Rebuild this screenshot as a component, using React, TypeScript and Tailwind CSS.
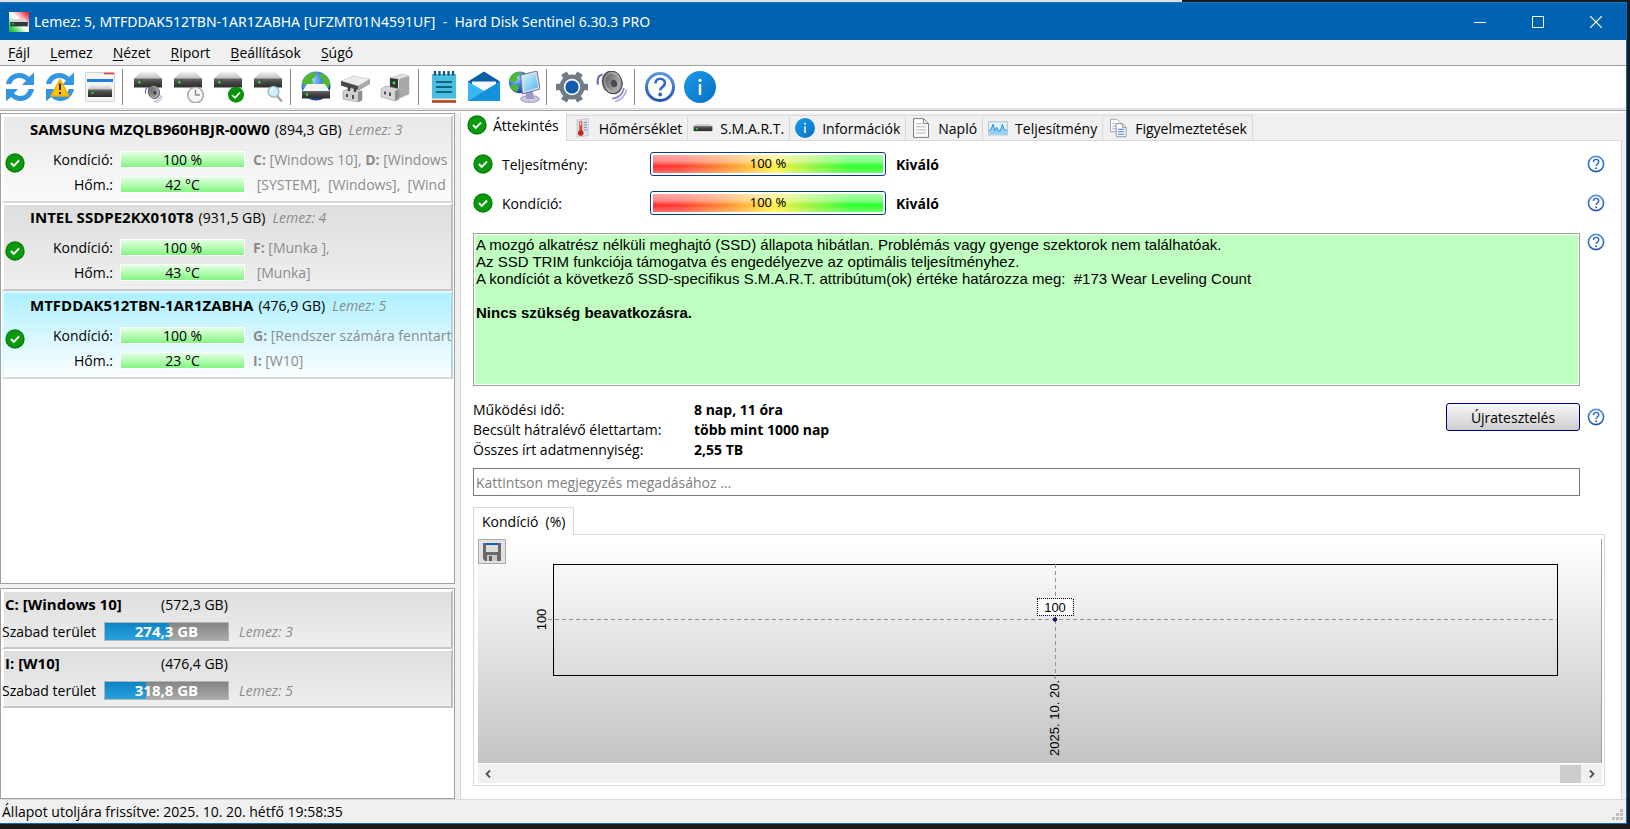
import { useState } from "react";
import type { ReactNode } from "react";

const menuItems = ["Fájl", "Lemez", "Nézet", "Riport", "Beállítások", "Súgó"];

const disks = [
  {
    name: "SAMSUNG MZQLB960HBJR-00W0",
    size: "(894,3 GB)",
    index: 3,
    health: "100 %",
    temp: "42 °C",
    volumes: [
      { letter: "C:", label: "[Windows 10], " },
      { letter: "D:", label: "[Windows" },
    ],
    second: [{ letter: "", label: " [SYSTEM],  [Windows],  [Wind" }],
    look: "bg-linear-to-b from-[#e8e8e8] to-[#fbfbfb] border-t-white border-l-white border-r-[#c8c8c8] border-b-[#d9d9d9]",
  },
  {
    name: "INTEL SSDPE2KX010T8",
    size: "(931,5 GB)",
    index: 4,
    health: "100 %",
    temp: "43 °C",
    volumes: [{ letter: "F:", label: "[Munka ]," }],
    second: [{ letter: "", label: " [Munka]" }],
    look: "bg-linear-to-b from-[#dedede] to-[#efefef] border-t-white border-l-white border-r-[#bcbcbc] border-b-[#c8c8c8]",
  },
  {
    name: "MTFDDAK512TBN-1AR1ZABHA",
    size: "(476,9 GB)",
    index: 5,
    health: "100 %",
    temp: "23 °C",
    volumes: [{ letter: "G:", label: "[Rendszer számára fenntart" }],
    second: [{ letter: "I:", label: "[W10]" }],
    look: "bg-linear-to-b from-[#adf0ff] to-[#fbfeff] border-t-[#dcfaff] border-l-[#dcfaff] border-r-[#b4d4dc] border-b-[#d9d9d9]",
  },
];

const volumes = [
  { name: "C: [Windows 10]", size: "(572,3 GB)", free: "274,3 GB", disk: 3, used: 52 },
  { name: "I: [W10]", size: "(476,4 GB)", free: "318,8 GB", disk: 5, used: 33 },
];

const stats = [
  { label: "Működési idő:", value: "8 nap, 11 óra" },
  { label: "Becsült hátralévő élettartam:", value: "több mint 1000 nap" },
  { label: "Összes írt adatmennyiség:", value: "2,55 TB" },
];

function Gradients() {
  return (
    <svg width="0" height="0" className="absolute" aria-hidden="true">
      <defs>
        <linearGradient id="metal" x1="0" y1="0" x2="0" y2="1">
          <stop offset="0" stopColor="#f2f2f2" />
          <stop offset="1" stopColor="#bdbdbd" />
        </linearGradient>
        <linearGradient id="front" x1="0" y1="0" x2="0" y2="1">
          <stop offset="0" stopColor="#6a6a6a" />
          <stop offset="0.4" stopColor="#474747" />
          <stop offset="1" stopColor="#2c2c2c" />
        </linearGradient>
        <radialGradient id="earth" cx="0.35" cy="0.3" r="0.8">
          <stop offset="0" stopColor="#a9dcff" />
          <stop offset="0.5" stopColor="#3579dc" />
          <stop offset="1" stopColor="#12348c" />
        </radialGradient>
        <linearGradient id="screen" x1="0" y1="0" x2="1" y2="1">
          <stop offset="0" stopColor="#d4f5ff" />
          <stop offset="1" stopColor="#4db4ee" />
        </linearGradient>
        <linearGradient id="rim" x1="0" y1="0" x2="1" y2="1">
          <stop offset="0" stopColor="#5e5e62" />
          <stop offset="0.5" stopColor="#b8b8ba" />
          <stop offset="1" stopColor="#77777b" />
        </linearGradient>
        <linearGradient id="cone" x1="0" y1="0" x2="1" y2="1">
          <stop offset="0" stopColor="#59595d" />
          <stop offset="1" stopColor="#c4c4c6" />
        </linearGradient>
        <linearGradient id="help" x1="0" y1="0" x2="0" y2="1">
          <stop offset="0" stopColor="#5b95e0" />
          <stop offset="1" stopColor="#2055b4" />
        </linearGradient>
        <linearGradient id="info" x1="0" y1="0" x2="1" y2="1">
          <stop offset="0" stopColor="#1c9bea" />
          <stop offset="1" stopColor="#0670c4" />
        </linearGradient>
        <linearGradient id="appicon" x1="0" y1="1" x2="1" y2="0">
          <stop offset="0" stopColor="#10b824" />
          <stop offset="0.15" stopColor="#3ccc4a" />
          <stop offset="0.48" stopColor="#ffffff" />
          <stop offset="0.56" stopColor="#ffffff" />
          <stop offset="0.88" stopColor="#f4454e" />
          <stop offset="1" stopColor="#ec1420" />
        </linearGradient>
      </defs>
    </svg>
  );
}

function Icon({ children, className = "size-8" }: { children: ReactNode; className?: string }) {
  return (
    <svg viewBox="0 0 32 32" className={`${className} shrink-0`} fill="none" aria-hidden="true">
      {children}
    </svg>
  );
}

function Drive() {
  return (
    <>
      <path d="M8 1h16l6 7H2z" fill="url(#metal)" />
      <path d="M2 7.5h28v9H2z" fill="url(#front)" />
      <circle cx="7.3" cy="11.3" r="1.2" fill="#2cf03a" />
    </>
  );
}

function Arrows() {
  return (
    <g fill="#3496e2">
      <path d="M2 13C3 6.500 8.500 2 15.500 2c3.800 0 7 1.500 9.300 4L30 1.800V14H18l4-4.300C20.300 8 18 7 15.500 7 11.500 7 8.500 9.300 7.300 13z" />
      <path d="M30 18c-1 6.500-6.500 12-13.500 12-3.800 0-7-1.500-9.300-4L2 30.200V18h12l-4 4.300c1.700 1.700 4 2.700 6.500 2.700 4 0 7-2.800 8.200-7z" />
    </g>
  );
}

function Speaker() {
  return (
    <>
      <path d="M6.500 3.500C2.500 4 .8 8 2 13.500" stroke="#6a62b8" strokeWidth="2" />
      <path d="M9 2.500C5 5 4.500 12 8 18.500l6 4-1-19z" fill="#8d8d92" />
      <ellipse cx="16.500" cy="11.500" rx="9.500" ry="11.500" transform="rotate(-18 16.500 11.500)" fill="url(#rim)" stroke="#3f3f44" strokeWidth="1" />
      <ellipse cx="17" cy="11.500" rx="7" ry="9" transform="rotate(-18 17 11.500)" fill="url(#cone)" />
      <ellipse cx="18" cy="12.500" rx="3" ry="3.800" transform="rotate(-18 18 12.500)" fill="#4a4a4e" />
      <path d="M16 27.500c6 0 11-4.500 12-10.500" stroke="#8c87cc" strokeWidth="1.700" />
      <path d="M19 30.500c5.500-.8 10.500-5.500 11.500-12" stroke="#b5b1de" strokeWidth="1.700" />
    </>
  );
}

function Globe({ x = 0, y = 0, scale = 1 }: { x?: number; y?: number; scale?: number }) {
  return (
    <g transform={`translate(${x} ${y}) scale(${scale})`}>
      <circle cx="15" cy="15" r="14.500" fill="url(#earth)" />
      <path d="M3 7c3-4 7-6 11-6l1 4-4 3 1 4-5 3-4-2-2 1C1 11 2 9 3 7zM19 2c5 1 9 5 10.300 10l-3 7-4-1-2-5 2-4-4-3zM6 18l6 1 2 4-3 5c-5-2-8-5-9-8z" fill="#4fb832" />
    </g>
  );
}

function Check({ className = "size-5" }: { className?: string }) {
  return (
    <Icon className={className}>
      <circle cx="16" cy="16" r="15.500" fill="#08790b" />
      <circle cx="16" cy="16" r="13.500" fill="#0a9a0d" />
      <path d="M9.500 16l4.500 4.500 8.500-8.500" stroke="#fff" strokeWidth="3" />
    </Icon>
  );
}

function HelpGlyph() {
  return (
    <>
      <circle cx="16" cy="16" r="13.500" fill="#fff" stroke="url(#help)" strokeWidth="3" />
      <path d="M11.500 12.500c0-3 2-4.700 4.700-4.700s4.700 1.700 4.700 4.300c0 3.900-4.700 4-4.700 7.400" stroke="#2f69c8" strokeWidth="2.600" />
      <circle cx="16.200" cy="23.500" r="1.900" fill="#2f69c8" />
    </>
  );
}

function InfoGlyph() {
  return (
    <>
      <circle cx="16" cy="16" r="16" fill="url(#info)" />
      <circle cx="16" cy="9.300" r="1.600" fill="#fff" />
      <path d="M16 13v11" stroke="#fff" strokeWidth="2.400" />
    </>
  );
}

function HelpButton() {
  return (
    <button aria-label="Súgó" className="shrink-0">
      <Icon className="size-[18px]">
        <HelpGlyph />
      </Icon>
    </button>
  );
}

const toolGroups: { label: string; art: ReactNode }[][] = [
  [
    { label: "Frissítés", art: <Arrows /> },
    {
      label: "Frissítés figyelmeztetéssel",
      art: (
        <>
          <Arrows />
          <path d="M16 8.500L25 25H7z" fill="#ffc20a" stroke="#f5ac00" strokeWidth="1.500" strokeLinejoin="round" />
          <path d="M16 12.500v6.500M16 21v2.300" stroke="#2b2b2b" strokeWidth="2" />
        </>
      ),
    },
    {
      label: "Lemez lista",
      art: (
        <>
          <path d="M1.500 1.500h29v29h-29z" fill="#f4f4f4" stroke="#d4d4d4" />
          <path d="M20 2.500h10" stroke="#e33a3a" strokeWidth="1.600" />
          <path d="M3 9.500h26" stroke="#1f7fe0" strokeWidth="3" />
          <path d="M7 14h18l4 5H3z" fill="url(#metal)" />
          <path d="M4 18.500h24v7.500H4z" fill="url(#front)" />
          <circle cx="8.500" cy="22" r="1.100" fill="#2cf03a" />
        </>
      ),
    },
  ],
  [
    {
      label: "Lemez hang",
      art: (
        <>
          <Drive />
          <g transform="translate(12.500 14.500) scale(0.580)">
            <Speaker />
          </g>
        </>
      ),
    },
    {
      label: "Lemez ütemezés",
      art: (
        <>
          <Drive />
          <circle cx="23.500" cy="24" r="7.800" fill="#f7f7f7" stroke="#a8a8a8" strokeWidth="1.500" />
          <path d="M23.500 18.500V24H28" stroke="#8e8e8e" strokeWidth="1.400" />
        </>
      ),
    },
    {
      label: "Lemez teszt",
      art: (
        <>
          <Drive />
          <circle cx="24" cy="23.700" r="8" fill="#08930b" />
          <path d="M20 24l3 2.800 5-5.300" stroke="#fff" strokeWidth="1.700" />
        </>
      ),
    },
    {
      label: "Lemez keresés",
      art: (
        <>
          <Drive />
          <path d="M25 25l5 5.500" stroke="#a4a4a4" strokeWidth="2.600" />
          <circle cx="21.500" cy="20.800" r="5.400" fill="#cfeeff" stroke="#9fb8cc" strokeWidth="1.400" />
          <path d="M18.500 20a3.500 3.500 0 013-2.700" stroke="#fff" strokeWidth="1.500" />
        </>
      ),
    },
  ],
  [
    {
      label: "Hálózati lemez",
      art: (
        <>
          <Globe x={1} />
          <path d="M7 13h18l5 8H2z" fill="#f4f4f4" />
          <path d="M2 20h28v7.500H2z" fill="url(#front)" />
          <circle cx="7" cy="23.500" r="1.200" fill="#2cf03a" />
        </>
      ),
    },
    {
      label: "Csatlakozó",
      art: (
        <>
          <path d="M1 10L13 5l17 3-12 7z" fill="#ececec" stroke="#c0c0c0" strokeWidth="0.600" />
          <path d="M1 10l17 5v5L1 14.500z" fill="#4a4a4a" />
          <path d="M18 15l12-7v5L18 20z" fill="#a8a8a8" />
          <path d="M3 20l8-3 11 3v9l-4 2-15-3z" fill="#cfcfcf" stroke="#979797" strokeWidth="0.600" />
          <path d="M18 21l4-1v9l-4 2z" fill="#8c8c8c" />
          <path d="M9 15v5M15 17v4" stroke="#3c3c3c" strokeWidth="2.400" />
          <path d="M7 23v3M13 24v4" stroke="#4a4a4a" strokeWidth="1.900" />
        </>
      ),
    },
    {
      label: "Dokkoló",
      art: (
        <>
          <path d="M10 7l12-4 7 2v18l-9 4-10-6z" fill="#e2e2e2" stroke="#b9b9b9" strokeWidth="0.600" />
          <path d="M19 8l10-3v18l-10 4z" fill="#a9a9a9" />
          <path d="M10 7l8 1v10l-8-1z" fill="#353535" />
          <circle cx="14" cy="12" r="1.400" fill="#2cf03a" />
          <path d="M1 18l5-3 13 3v10l-4 2-14-4z" fill="#d6d6d6" stroke="#9c9c9c" strokeWidth="0.600" />
          <path d="M15 20l4-2v10l-4 2z" fill="#8f8f8f" />
          <path d="M5 20.500v3M10 21.500v3.500" stroke="#4a4a4a" strokeWidth="1.900" />
        </>
      ),
    },
  ],
  [
    {
      label: "Napló",
      art: (
        <>
          <path d="M4 3h24v28H4z" fill="#48bfe0" />
          <path d="M4 29h24v2.800H4z" fill="#b0471a" />
          <path d="M4 27.500h24v1.700H4z" fill="#f1e9e3" />
          <path d="M8 11h16M8 16h16M8 21h16" stroke="#14657f" strokeWidth="2" />
          <path d="M7 0v4.500M11.500 0v4.500M16 0v4.500M20.500 0v4.500M25 0v4.500" stroke="#14536a" strokeWidth="2.200" />
        </>
      ),
    },
    {
      label: "E-mail",
      art: (
        <>
          <path d="M0 10.500L16 .500l16 10V18H0z" fill="#0f5fa8" />
          <path d="M4 10.500h24V20H4z" fill="#f5f9fd" />
          <path d="M0 10.500L16 20l16-9.500V30H0z" fill="#35b8f4" />
          <path d="M32 10.500L0 30h32z" fill="#1592dc" />
        </>
      ),
    },
    {
      label: "Hálózat",
      art: (
        <>
          <Globe x={0.5} y={0} scale={0.75} />
          <ellipse cx="22" cy="28" rx="9.500" ry="3.500" fill="#c9c8dc" stroke="#8d8bb0" strokeWidth="0.800" />
          <path d="M18 20h7l1 8h-8z" fill="#9d9bc8" />
          <path d="M12.500 4L29 0l3 18-17.500 5z" fill="#dcdcea" stroke="#6f6e9c" strokeWidth="1" />
          <path d="M14.800 6l12.800-3.300L30 16.500 16.500 20.500z" fill="url(#screen)" />
        </>
      ),
    },
  ],
  [
    {
      label: "Beállítások",
      art: (
        <>
          <circle cx="16" cy="16" r="9.500" stroke="#6f7b87" strokeWidth="6" />
          <g stroke="#6f7b87" strokeWidth="6.500">
            <path d="M0 16h6M26 16h6M8 2.200l3 5.200M21 24.600l3 5.200M24 2.200l-3 5.200M11 24.600l-3 5.200" />
          </g>
          <circle cx="16" cy="16" r="8.200" fill="#fff" />
          <circle cx="16" cy="16" r="6.600" fill="#0f5cae" />
        </>
      ),
    },
    { label: "Hang", art: <Speaker /> },
  ],
  [
    { label: "Súgó", art: <HelpGlyph /> },
    { label: "Információ", art: <InfoGlyph /> },
  ],
];

const tabs: { label: string; art: ReactNode }[] = [
  { label: "Áttekintés", art: <Check /> },
  {
    label: "Hőmérséklet",
    art: (
      <Icon className="size-5">
        <path d="M8 3l18-2v27l-18 3z" fill="#dbe2ec" stroke="#b4bece" />
        <path d="M19 7h5M19 11h5M19 15h5M19 19h5" stroke="#6e8fae" strokeWidth="1.500" />
        <path d="M14 7v15" stroke="#e4443a" strokeWidth="5" strokeLinecap="round" />
        <circle cx="14" cy="24" r="4.500" fill="#c9251d" />
        <path d="M14 6v6" stroke="#fff" strokeWidth="1.500" />
      </Icon>
    ),
  },
  {
    label: "S.M.A.R.T.",
    art: (
      <Icon className="size-5">
        <path d="M5 10h22l4 3H1z" fill="#c9c9c9" />
        <path d="M1 13h30v8H1z" fill="url(#front)" />
        <circle cx="6" cy="17" r="1.500" fill="#2cf03a" />
      </Icon>
    ),
  },
  {
    label: "Információk",
    art: (
      <Icon className="size-5">
        <InfoGlyph />
      </Icon>
    ),
  },
  {
    label: "Napló",
    art: (
      <Icon className="size-5">
        <path d="M4 1h16l8 8v22H4z" fill="#fdfdfd" stroke="#7d7d7d" strokeWidth="1.600" />
        <path d="M20 1v8h8" stroke="#7d7d7d" strokeWidth="1.600" />
        <path d="M8 9h8M8 14h16M8 19h16M8 24h16" stroke="#b5b5b5" strokeWidth="1.600" />
      </Icon>
    ),
  },
  {
    label: "Teljesítmény",
    art: (
      <Icon className="size-5">
        <path d="M1 6h30v21H1z" fill="#e3f2fb" stroke="#a9bfce" strokeWidth="1.500" />
        <path d="M2 20l3-2 3-8 3 10 3-5 3 6 3-1 3-10 3 8 4 2v6H2z" fill="#8fd0f5" />
        <path d="M2 20l3-2 3-8 3 10 3-5 3 6 3-1 3-10 3 8 4 2" stroke="#2b90d4" strokeWidth="1.600" />
      </Icon>
    ),
  },
  {
    label: "Figyelmeztetések",
    art: (
      <Icon className="size-5">
        <path d="M4 2h10l6 6v14H4z" fill="#fafafa" stroke="#9b9b9b" strokeWidth="1.400" />
        <path d="M7 9h6M7 13h6M7 17h6" stroke="#8cb4ec" strokeWidth="1.400" />
        <path d="M13 9h10l6 6v15H13z" fill="#fafafa" stroke="#8a8a8a" strokeWidth="1.400" />
        <path d="M23 9v6h6" stroke="#8a8a8a" strokeWidth="1.400" />
        <path d="M16 18h10M16 22h10M16 26h10" stroke="#3b82e6" strokeWidth="1.600" />
      </Icon>
    ),
  },
];

function TitleBar() {
  return (
    <header className="flex h-[38px] items-stretch border-t border-[#1a78c2] bg-[#0063b1] text-white">
      <div className="flex min-w-0 flex-1 items-center gap-[5px] pl-[9px]">
        <Icon className="size-5">
          <path d="M0 0h32v32H0z" fill="url(#appicon)" />
          <path d="M6 11h20l4 5H2z" fill="#d5d5d5" />
          <path d="M2 16h28v7H2z" fill="#2e3a34" />
          <path d="M5 19h2.500" stroke="#2cf03a" strokeWidth="2" />
        </Icon>
        <h1 className="truncate font-['Noto_Sans','Open_Sans',sans-serif] whitespace-pre">
          {"Lemez: 5, MTFDDAK512TBN-1AR1ZABHA [UFZMT01N4591UF]  -  Hard Disk Sentinel 6.30.3 PRO"}
        </h1>
      </div>
      <div className="flex pr-px">
        <button aria-label="Kis méret" className="flex w-[58px] items-center justify-center">
          <svg width="12" height="12" stroke="#fff">
            <path d="M0 6.500h12" />
          </svg>
        </button>
        <button aria-label="Teljes méret" className="flex w-[58px] items-center justify-center">
          <svg width="12" height="12" fill="none" stroke="#fff">
            <path d="M.5.5h11v11H.5z" />
          </svg>
        </button>
        <button aria-label="Bezárás" className="flex w-[58px] items-center justify-center">
          <svg width="12" height="12" stroke="#fff" strokeWidth="1.200">
            <path d="M0 0l12 12M12 0L0 12" />
          </svg>
        </button>
      </div>
    </header>
  );
}

function Toolbar() {
  return (
    <div role="toolbar" className="flex h-[43px] border-b border-[#d9d9d9] bg-white">
      {toolGroups.map((group, i) => (
        <div key={i} className="flex">
          {i > 0 && <div className="my-[3px] mr-[5px] ml-0.5 w-px bg-[#8a8a8a]" />}
          {group.map((tool) => (
            <button key={tool.label} aria-label={tool.label} className="flex w-10 items-center justify-center">
              <Icon>{tool.art}</Icon>
            </button>
          ))}
        </div>
      ))}
    </div>
  );
}

type Volume = { letter: string; label: string };

function VolumeText({ items }: { items: Volume[] }) {
  return (
    <div className="min-w-0 flex-1 whitespace-pre text-[#8c8c8c]">
      {items.map((v, i) => (
        <span key={i}>
          {v.letter && <b>{v.letter} </b>}
          {v.label}
        </span>
      ))}
    </div>
  );
}

function DiskRow({ label, value, items }: { label: string; value: string; items: Volume[] }) {
  return (
    <div className="flex h-[25px] items-center">
      <div className="w-[87px] pr-[7px] text-right">{label}</div>
      <div className="mr-2 flex h-[17px] w-[125px] items-center justify-center border border-white bg-linear-to-b from-[#e4ffe4] to-[#80f680]">
        {value}
      </div>
      <VolumeText items={items} />
    </div>
  );
}

function DiskList() {
  return (
    <section className="flex-1 border border-[#a0a0a0] bg-white p-px">
      {disks.map((d) => (
        <article key={d.name} className={`border-2 ${d.look}`}>
          <h2 className="flex h-6 items-center gap-[5px] pl-[26px]">
            <b className="text-[15px]">{d.name}</b>
            <span>{d.size}</span>
            <i className="pl-0.5 text-[#8c8c8c]">Lemez: {d.index}</i>
          </h2>
          <div className="flex items-center pt-1.5 pb-1">
            <div className="w-[29px] pb-[18px] pl-px">
              <Check />
            </div>
            <div className="min-w-0 flex-1">
              <DiskRow label="Kondíció:" value={d.health} items={d.volumes} />
              <DiskRow label="Hőm.:" value={d.temp} items={d.second} />
            </div>
          </div>
        </article>
      ))}
    </section>
  );
}

function VolumeList() {
  return (
    <section className="h-[211px] border border-[#a0a0a0] bg-white p-px">
      {volumes.map((v) => (
        <article
          key={v.name}
          className="border-2 border-t-white border-r-[#bcbcbc] border-b-[#c8c8c8] border-l-white bg-linear-to-b from-[#dedede] to-[#efefef]"
        >
          <h2 className="flex h-6 items-center pl-px">
            <b className="w-[156px] text-[15px]">{v.name}</b>
            <span>{v.size}</span>
          </h2>
          <div className="flex h-[31px] items-center">
            <span className="-ml-0.5 w-[102px]">Szabad terület</span>
            <div className="relative flex h-[19px] w-[125px] items-center justify-center border border-[#b4b4b4] bg-linear-to-b from-[#858585] to-[#a9a9a9] text-[15px] font-bold text-white">
              <div
                className="absolute inset-y-0 left-0 bg-linear-to-b from-[#0a84c6] to-[#2aa0dc]"
                style={{ width: `${v.used}%` }}
              />
              <span className="relative">{v.free}</span>
            </div>
            <i className="pl-2.5 text-[#8c8c8c]">Lemez: {v.disk}</i>
          </div>
        </article>
      ))}
    </section>
  );
}

function Meter({ label }: { label: string }) {
  return (
    <div className="flex h-6 items-center">
      <Check />
      <span className="w-[157px] pl-[9px]">{label}</span>
      <div className="h-6 w-[236px] rounded-[3px] border border-[#0a3a78] bg-white p-0.5">
        <div className="relative h-full bg-[linear-gradient(to_right,#ff2a2a_0%,#ff3a30_12%,#ff9a2e_35%,#fff23a_53%,#8cf43a_70%,#2bff2b_86%)]">
          <div className="absolute inset-0 flex items-center justify-center bg-[linear-gradient(to_bottom,#ffffff90_0%,#ffffff70_35%,#ffffff00_62%,#ffffff50_100%)] font-['Noto_Sans','Open_Sans',sans-serif] text-[13px]">
            100 %
          </div>
        </div>
      </div>
      <b className="flex-1 pl-2.5">Kiváló</b>
      <HelpButton />
    </div>
  );
}

function Chart() {
  return (
    <div className="flex min-h-0 flex-1 flex-col border-r border-[#a0a0a0] bg-linear-to-b from-white to-[#c4c4c4]">
      <button
        aria-label="Mentés"
        className="flex h-[25px] w-7 shrink-0 items-center justify-center border border-[#adadad] bg-[#e1e1e1]"
      >
        <svg width="18" height="18" viewBox="0 0 18 18">
          <path d="M0 0h18v18H2l-2-2z" fill="#696969" />
          <path d="M3 0h12v9H3z" fill="#dcdcdc" />
          <path d="M3 0h12v2H3z" fill="#0e63b4" />
          <path d="M4 12h10v6H4z" fill="#c9c9c9" />
          <path d="M6 13h3v5H6z" fill="#5d5d5d" />
        </svg>
      </button>
      <div className="flex min-h-0 flex-1 flex-col pr-11 pb-[88px] pl-[75px]">
        <svg
          className="block h-0 min-h-0 w-full flex-1 overflow-visible"
          fontFamily="Liberation Sans, Arial, sans-serif"
          fontSize="13"
        >
          <rect x="0" y="0" width="100%" height="100%" fill="none" stroke="#000" shapeRendering="crispEdges" />
          <g stroke="#949494" strokeDasharray="4 3" shapeRendering="crispEdges">
            <line x1="-5" x2="100%" y1="50%" y2="50%" />
            <line x1="50%" x2="50%" y1="0" y2="100%" />
          </g>
          <svg x="0" y="50%" overflow="visible">
            <text transform="translate(-7 0) rotate(-90)" textAnchor="middle">100</text>
          </svg>
          <svg x="50%" y="50%" overflow="visible">
            <rect x="-18" y="-21" width="35" height="17" fill="#fff" />
            <g stroke="#000" strokeDasharray="1 1" shapeRendering="crispEdges">
              <path d="M-18 -21h36M-18 -4h36M-18 -21v17M18 -21v17" />
            </g>
            <text x="0" y="-8" textAnchor="middle">100</text>
            <circle cx="0" cy="0" r="1.700" fill="#0000d0" stroke="#000" />
          </svg>
          <svg x="50%" y="100%" overflow="visible">
            <path d="M0 0v4" stroke="#777" />
            <text transform="translate(4 5) rotate(-90)" textAnchor="end">2025. 10. 20.</text>
          </svg>
        </svg>
      </div>
    </div>
  );
}

function Overview() {
  return (
    <div className="flex min-h-0 flex-1 flex-col border-r border-[#d9d9d9] bg-white pt-[11px] pr-4 pb-[13px] pl-3">
      <div className="flex flex-col gap-[15px]">
        <Meter label="Teljesítmény:" />
        <Meter label="Kondíció:" />
      </div>

      <div className="mt-[18px] flex items-start gap-[7px]">
        <div className="h-[153px] flex-1 border border-[#a0a0a0] bg-[#bfffbf] px-0.5 pt-0.5 font-['Liberation_Sans',Arial,sans-serif] text-[15px] leading-[17px] outline outline-offset-[-2px] outline-white">
          <p>A mozgó alkatrész nélküli meghajtó (SSD) állapota hibátlan. Problémás vagy gyenge szektorok nem találhatóak.</p>
          <p>Az SSD TRIM funkciója támogatva és engedélyezve az optimális teljesítményhez.</p>
          <p className="whitespace-pre">
            {"A kondíciót a következő SSD-specifikus S.M.A.R.T. attribútum(ok) értéke határozza meg:  #173 Wear Leveling Count"}
          </p>
          <p className="mt-[17px] font-bold">Nincs szükség beavatkozásra.</p>
        </div>
        <HelpButton />
      </div>

      <div className="mt-[14px] flex items-start">
        <dl className="flex-1 leading-5">
          {stats.map((s) => (
            <div key={s.label} className="flex">
              <dt className="w-[221px]">{s.label}</dt>
              <dd className="font-bold">{s.value}</dd>
            </div>
          ))}
        </dl>
        <div className="flex items-center gap-[7px] pt-[3px]">
          <button className="h-7 w-[134px] rounded-[3px] border border-[#000080] bg-linear-to-b from-[#f8f8f8] to-[#cdcdcd]">
            Újratesztelés
          </button>
          <HelpButton />
        </div>
      </div>

      <div className="mt-2 pr-[25px]">
        <input
          type="text"
          aria-label="Megjegyzés"
          placeholder="Kattintson megjegyzés megadásához ..."
          className="block h-7 w-full border border-[#7a7a7a] bg-white px-0.5 placeholder:text-[#808080]"
        />
      </div>

      <div className="mt-[11px] flex min-h-0 flex-1 flex-col">
        <button className="z-10 -mb-px h-7 shrink-0 self-start border border-b-0 border-[#d9d9d9] bg-white px-2 whitespace-pre">
          {"Kondíció  (%)"}
        </button>
        <div className="flex min-h-0 flex-1 flex-col border border-[#d9d9d9] pt-1 pr-0.5 pb-0.5 pl-1">
          <Chart />
          <div className="mt-px flex h-[19px] shrink-0 items-center justify-between bg-[#f0f0f0]">
            <button aria-label="Balra" className="flex w-5 justify-center">
              <svg width="6" height="8" fill="none" stroke="#505050" strokeWidth="1.800">
                <path d="M5 0.500L1.500 4 5 7.500" />
              </svg>
            </button>
            <div className="flex h-full items-center">
              <div className="h-[18px] w-[21px] bg-[#cdcdcd]" />
              <button aria-label="Jobbra" className="flex w-[21px] justify-center">
                <svg width="6" height="8" fill="none" stroke="#505050" strokeWidth="1.800">
                  <path d="M1 0.500L4.500 4 1 7.500" />
                </svg>
              </button>
            </div>
          </div>
        </div>
      </div>
    </div>
  );
}

export default function App() {
  const [active, setActive] = useState(0);

  return (
    <div className="flex h-screen flex-col bg-[#1b1b1b] font-['Open_Sans',sans-serif] text-[14px] text-black">
      <Gradients />
      <div className="flex h-0.5 shrink-0">
        <div className="w-[72.5%] bg-[#dedede]" />
      </div>
      <div className="mr-[3px] mb-[5px] flex min-h-0 flex-1 flex-col border-r border-b border-[#0f6cbd] bg-[#f0f0f0]">
        <TitleBar />
        <nav className="flex h-[26px] items-center gap-5 border-b border-[#a0a0a0] pl-2">
          {menuItems.map((item) => (
            <a key={item} href="#">
              <u className="underline-offset-2">{item[0]}</u>
              {item.slice(1)}
            </a>
          ))}
        </nav>
        <Toolbar />
        <div className="mt-px border-t border-[#a0a0a0] bg-white pt-0.5" />

        <main className="flex min-h-0 flex-1">
          <aside className="flex w-[455px] shrink-0 flex-col gap-1">
            <DiskList />
            <VolumeList />
          </aside>
          <div className="ml-[5px] flex min-w-0 flex-1 flex-col border-l border-[#d9d9d9] pr-1">
            <div role="tablist" className="flex h-7 shrink-0 items-end">
              {tabs.map((tab, i) => (
                <button
                  key={tab.label}
                  role="tab"
                  aria-selected={i === active}
                  onClick={() => setActive(i)}
                  className={
                    i === active
                      ? "flex h-7 items-center gap-1.5 border-r border-[#d9d9d9] bg-white pr-[7px] pb-1 pl-1.5"
                      : "flex h-[26px] items-center gap-[7px] border-t border-r border-b border-[#d9d9d9] px-[5px]"
                  }
                >
                  {tab.art}
                  {tab.label}
                </button>
              ))}
              <div className="flex-1 border-b border-[#d9d9d9]" />
            </div>
            <Overview />
          </div>
        </main>

        <footer className="flex h-6 shrink-0 items-center justify-between border-t border-[#d9d9d9] pl-0.5">
          <span>Állapot utoljára frissítve: 2025. 10. 20. hétfő 19:58:35</span>
          <svg width="12" height="12" fill="#bfbfbf" className="mt-1.5 mr-0.5" aria-hidden="true">
            <path d="M8 0h3v3H8zM4 4h3v3H4zM8 4h3v3H8zM0 8h3v3H0zM4 8h3v3H4zM8 8h3v3H8z" />
          </svg>
        </footer>
      </div>
    </div>
  );
}
